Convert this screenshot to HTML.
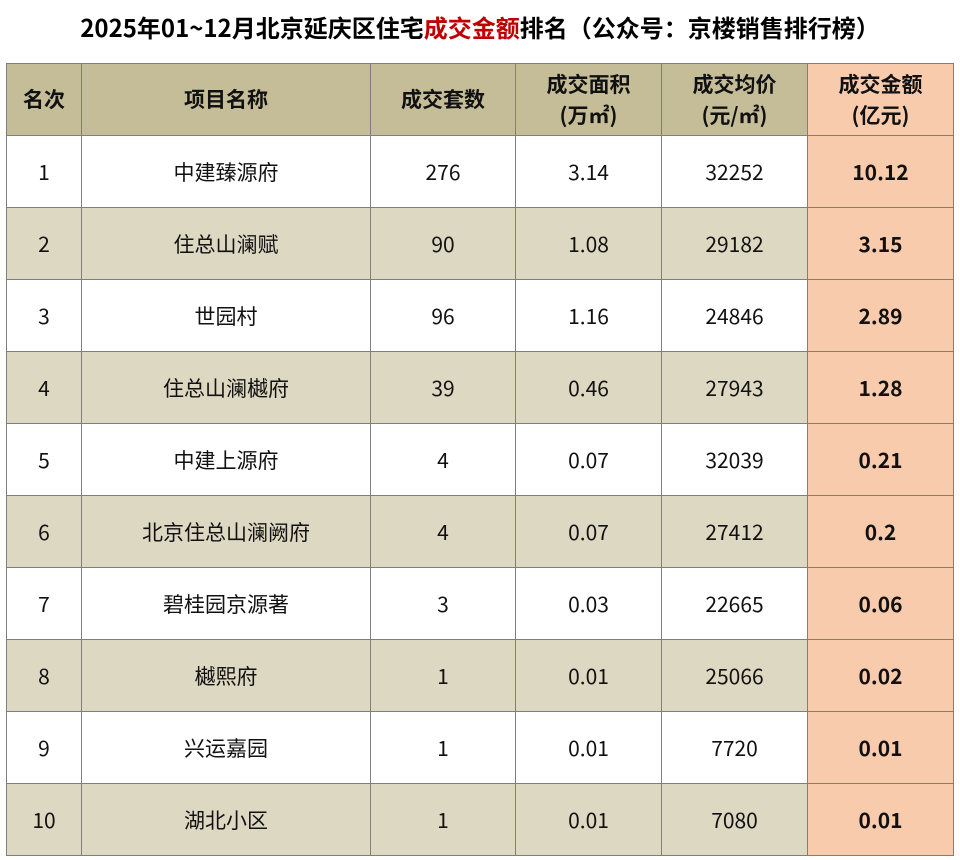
<!DOCTYPE html>
<html><head><meta charset="utf-8"><style>
body{margin:0;width:960px;height:860px;background:#fff;font-family:"Noto Sans CJK SC","Liberation Sans",sans-serif;overflow:hidden}
.t{position:absolute;top:10px;left:0;width:960px;text-align:center;font-size:24px;font-weight:bold;color:#000;line-height:34px;white-space:nowrap}
.t span{color:#c00000}
table{position:absolute;left:6px;top:63px;border-collapse:collapse;table-layout:fixed}
td{border:1px solid #7f7f7f;text-align:center;font-size:21px;height:71px;padding:0;color:#111;line-height:28px}
tr.h td{background:#c5bd97;font-weight:bold;font-size:21px;line-height:31px;height:71px}
tr.a td{background:#ddd8c2}
td.o{background:#f8cbad!important;font-weight:bold}
</style></head><body>
<div class="t">2025年01~12月北京延庆区住宅<span>成交金额</span>排名（公众号：京楼销售排行榜）</div>
<table>
<colgroup><col style="width:75px"><col style="width:289px"><col style="width:145px"><col style="width:146px"><col style="width:146px"><col style="width:146px"></colgroup>
<tr class="h"><td>名次</td><td>项目名称</td><td>成交套数</td><td>成交面积<br>(万㎡)</td><td>成交均价<br>(元/㎡)</td><td class="o">成交金额<br>(亿元)</td></tr>
<tr><td>1</td><td>中建臻源府</td><td>276</td><td>3.14</td><td>32252</td><td class="o">10.12</td></tr>
<tr class="a"><td>2</td><td>住总山澜赋</td><td>90</td><td>1.08</td><td>29182</td><td class="o">3.15</td></tr>
<tr><td>3</td><td>世园村</td><td>96</td><td>1.16</td><td>24846</td><td class="o">2.89</td></tr>
<tr class="a"><td>4</td><td>住总山澜樾府</td><td>39</td><td>0.46</td><td>27943</td><td class="o">1.28</td></tr>
<tr><td>5</td><td>中建上源府</td><td>4</td><td>0.07</td><td>32039</td><td class="o">0.21</td></tr>
<tr class="a"><td>6</td><td>北京住总山澜阙府</td><td>4</td><td>0.07</td><td>27412</td><td class="o">0.2</td></tr>
<tr><td>7</td><td>碧桂园京源著</td><td>3</td><td>0.03</td><td>22665</td><td class="o">0.06</td></tr>
<tr class="a"><td>8</td><td>樾熙府</td><td>1</td><td>0.01</td><td>25066</td><td class="o">0.02</td></tr>
<tr><td>9</td><td>兴运嘉园</td><td>1</td><td>0.01</td><td>7720</td><td class="o">0.01</td></tr>
<tr class="a"><td>10</td><td>湖北小区</td><td>1</td><td>0.01</td><td>7080</td><td class="o">0.01</td></tr>
</table>
</body></html>
